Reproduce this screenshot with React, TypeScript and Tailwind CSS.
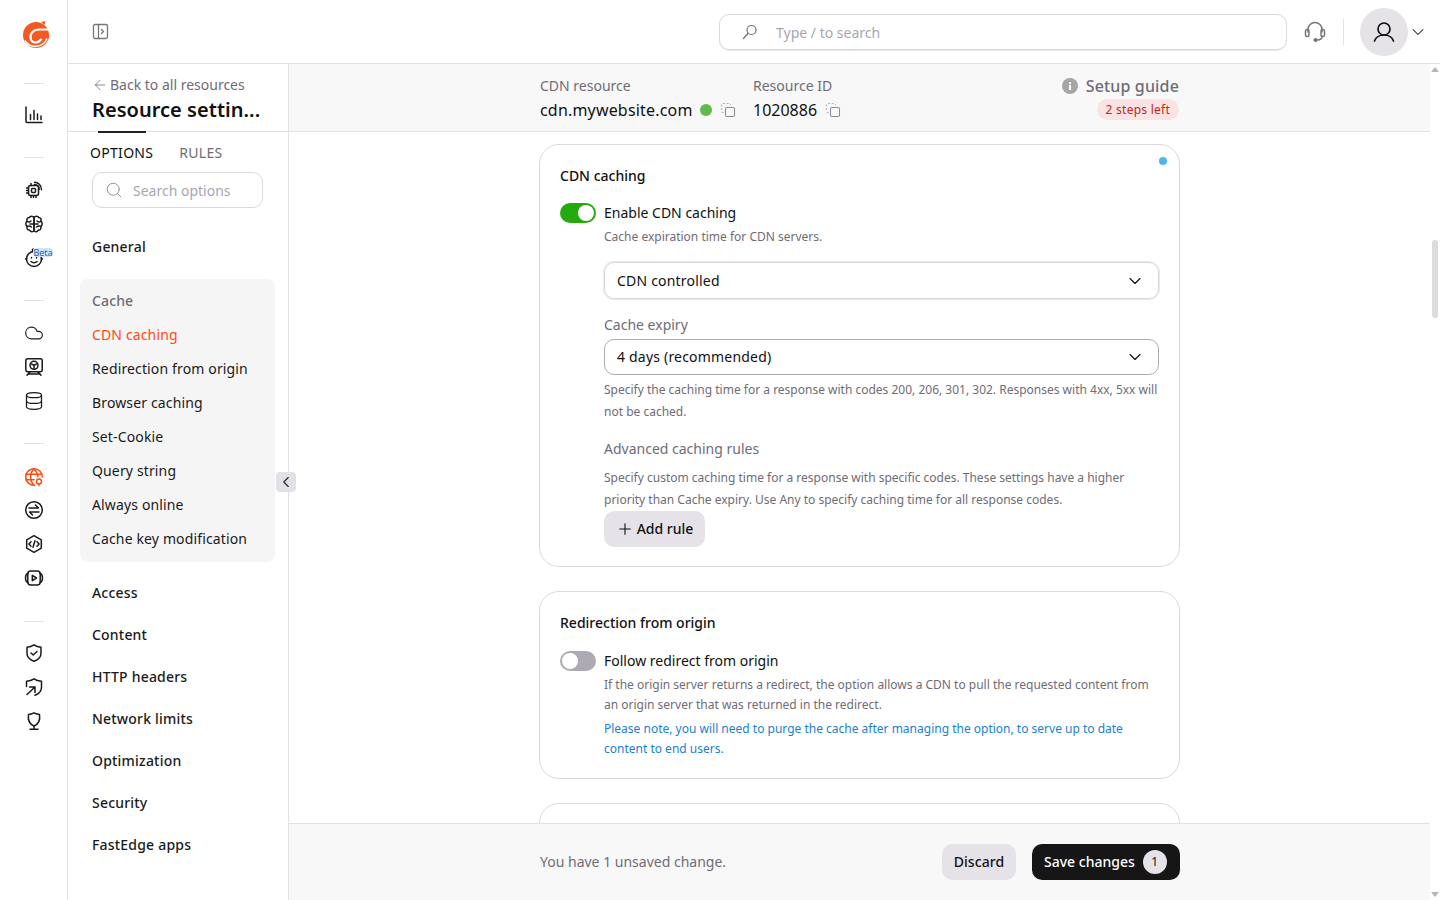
import React from 'react';
import { ArrowLeft, ChevronDown, ChevronLeft, Cloud, Database, Plus, Search } from 'lucide-react';

const Ico = ({ children, color = '#1a1a1a', size = 20 }: { children: React.ReactNode; color?: string; size?: number }) => (
    <svg width={size} height={size} viewBox="0 0 20 20" fill="none" stroke={color} strokeWidth="1.5" strokeLinecap="round" strokeLinejoin="round">
        {children}
    </svg>
);

const Logo = () => (
    <svg width="36" height="38" viewBox="0 0 36 38" fill="none" className="ml-[4px]">
        <circle cx="18" cy="19" r="13" fill="#f15a22" />
        <path d="M23 6l4.500-1-1 4z" fill="#f15a22" />
        <path d="M33 13.500H21.500C15.500 13.500 12 17.500 12.500 22c.4 3.300 3 4.800 6 4.300 2.500-.4 4-1.800 5-3.800" stroke="#fff" strokeWidth="2.200" />
        <path d="M17 20.500H31" stroke="#f15a22" strokeWidth="4" />
        <path d="M7 24.500c3 5 8 6.500 13 5.600 4-.8 7.300-3.600 9-7.600" stroke="#fff" strokeWidth="1.500" />
    </svg>
);

const Divider = ({ className }: { className: string }) => <div className={`w-5 h-px bg-[#e3e1e6] ${className}`} />;

const RailIcon = ({ children, className = '' }: { children: React.ReactNode; className?: string }) => (
    <div className={`h-5 w-5 flex items-center justify-center ${className}`}>{children}</div>
);

function Rail() {
    return (
        <aside className="w-[68px] shrink-0 h-full border-r border-[#e3e1e6] flex flex-col items-center pt-[16px] pl-px">
            <Logo />
            <Divider className="mt-[29px]" />
            <RailIcon className="mt-[21px]">
                <Ico>
                    <path d="M2 2v14.500a1 1 0 0 0 1 1h15" />
                    <path d="M6.500 9.500v5M10 5.500v9M13.500 9v5.500M17 11v3.500" />
                </Ico>
            </RailIcon>
            <Divider className="mt-[32px]" />
            <RailIcon className="mt-[22px]">
                <Ico>
                    <rect x="4.500" y="5.500" width="10" height="10" rx="2" />
                    <rect x="7.500" y="8.500" width="4" height="4" rx="1" />
                    <path d="M2.500 8h2M2.500 10.500h2M2.500 13h2M7 15.500v2M9.500 15.500v2M12 15.500v2M7 3.500v2" />
                    <path d="M10.500 2.200c3.500 0 7 3 7 7.500M10.500 4.500c2.500 0 4.700 2 4.700 4.700" />
                </Ico>
            </RailIcon>
            <RailIcon className="mt-[14px]">
                <Ico>
                    <path d="M10 3.500C9 1.800 6 1.800 5.200 3.600 3.200 3.600 2.200 5.600 3.200 7.200c-1.800 1.100-1.800 4.100 0 5.200-.8 2 .6 4 2.400 3.600.8 2 3.400 2.400 4.400.5z" />
                    <path d="M10 3.500c1-1.700 4-1.700 4.800.1 2 0 3 2 2 3.600 1.800 1.100 1.800 4.100 0 5.200.8 2-.6 4-2.400 3.600-.8 2-3.400 2.400-4.400.5z" />
                    <path d="M3.200 7.200C4.500 8.500 6 8 7 7M3.200 12.400c1.800-.9 2.800-.6 4.300.6M10 10H6M16.800 7.200C15.500 8.500 14 8 13 7M16.800 12.400c-1.800-.9-2.800-.6-4.300.6M10 10h4" />
                </Ico>
            </RailIcon>
            <div className="relative mt-[14px] h-5 w-5 flex items-center justify-center">
                <Ico>
                    <circle cx="10" cy="11" r="7.500" />
                    <path d="M10 3.500c-1.500-.5-2-1.500-1-2.500" />
                    <path d="M7 13.500c1.500 1.500 4.500 1.500 6 0" />
                    <path d="M7.500 9.500v.5M12.500 9.500v.5" />
                    <path d="M2.500 11h-1M18.500 11h-1" />
                </Ico>
                <span className="absolute left-[9px] top-0 h-[9px] w-5 text-center rounded-[4px] bg-[#cfe4fa] text-[9px] leading-[9px] text-[#2a66a8]">Beta</span>
            </div>
            <Divider className="mt-[32px]" />
            <RailIcon className="mt-[22px]"><Cloud size={22} strokeWidth={1.4} color="#1a1a1a" /></RailIcon>
            <RailIcon className="mt-[14px]">
                <Ico>
                    <rect x="1.800" y="1.800" width="16.400" height="13" rx="2" />
                    <circle cx="10" cy="8.300" r="4" />
                    <path d="M7.500 7l2.500 1.300L12.500 7M10 8.300v3" />
                    <path d="M3 18.300l3-3.500M17 18.300l-3-3.500M5 17h10" />
                </Ico>
            </RailIcon>
            <RailIcon className="mt-[14px]"><Database size={20} strokeWidth={1.5} color="#1a1a1a" /></RailIcon>
            <Divider className="mt-[32px]" />
            <RailIcon className="mt-[23px]">
                <Ico color="#ff4b12">
                    <path d="M10.500 18.300a8.300 8.300 0 1 1 7.800-8.300" />
                    <path d="M2 7.300h16M2 12.800h8M10 1.700c-4.500 4.500-4.500 12 0 16.600M10 1.700c2.500 2.500 3.700 5.300 3.800 8" />
                    <circle cx="15" cy="14.500" r="2.500" />
                    <path d="M15 17v1.500" />
                </Ico>
            </RailIcon>
            <RailIcon className="mt-[13px]">
                <Ico>
                    <circle cx="10" cy="10" r="8.300" />
                    <path d="M5 8h9.500l-3-3M15 12H5.500l3 3" />
                </Ico>
            </RailIcon>
            <RailIcon className="mt-[14px]">
                <Ico>
                    <path d="M10 1.700l7.300 4.200v8.200L10 18.300l-7.300-4.200V5.900z" />
                    <path d="M7 7.700L4.900 10 7 12.300M13 7.700l2.100 2.300-2.100 2.300M11 6.800L9 13.200" />
                </Ico>
            </RailIcon>
            <RailIcon className="mt-[14px]">
                <Ico>
                    <rect x="3.800" y="3" width="12.400" height="14" rx="3" />
                    <path d="M3.800 5.500C2 6 1.500 7.500 1.500 10s.5 4 2.300 4.500M16.200 5.500c1.800.5 2.300 2 2.300 4.500s-.5 4-2.300 4.500" />
                    <path d="M8.300 7.300l4.200 2.700-4.200 2.700z" />
                </Ico>
            </RailIcon>
            <Divider className="mt-[33px]" />
            <RailIcon className="mt-[21px]">
                <Ico>
                    <path d="M10 1.800c2 1.500 4.300 2.300 7 2.500v6c0 3.700-2.800 6.500-7 8-4.200-1.500-7-4.300-7-8v-6c2.700-.2 5-1 7-2.500z" />
                    <path d="M7 10l2.200 2 3.800-3.500" />
                </Ico>
            </RailIcon>
            <RailIcon className="mt-[14px]">
                <Ico>
                    <path d="M2.500 9.500V4.300c2.700-.2 5.500-1 7.500-2.500 2 1.500 4.800 2.300 7.500 2.500v6c0 3.500-2.500 6.500-6.500 8" />
                    <path d="M3 17.500L11 10M5.500 10H11v5.500" />
                </Ico>
            </RailIcon>
            <RailIcon className="mt-[14px]">
                <Ico>
                    <path d="M10 1.800c2 1 3.500 1.500 5.500 1.700.8 5 .3 9-5.500 11.500-5.800-2.500-6.300-6.500-5.500-11.500 2-.2 3.500-.7 5.500-1.700z" />
                    <path d="M10 15v3.300M6 18.300h8" />
                </Ico>
            </RailIcon>
        </aside>
    );
}

const cacheItems = ['CDN caching', 'Redirection from origin', 'Browser caching', 'Set-Cookie', 'Query string', 'Always online', 'Cache key modification'];
const navItems = ['Access', 'Content', 'HTTP headers', 'Network limits', 'Optimization', 'Security', 'FastEdge apps'];

function Sidebar() {
    return (
        <div className="w-[221px] shrink-0 h-full border-r border-[#e3e1e6] relative">
            <div className="h-[68px] border-b border-[#e3e1e6] pl-6 pt-[10px] relative">
                <div className="flex items-center gap-[2px] text-sm leading-[22px] text-[#6f6c76]">
                    <ArrowLeft size={16} strokeWidth={1.25} />
                    <span>Back to all resources</span>
                </div>
                <div className="text-[20px] leading-[28px] font-semibold text-[#111] tracking-[0.04px]">Resource settin...</div>
                <div className="absolute left-[30px] bottom-[-2px] w-12 h-[2px] bg-[#222]" />
            </div>
            <div className="flex gap-[26px] pl-[22px] pt-[11px] text-sm leading-5 tracking-[0.3px]">
                <span className="text-[#111]">OPTIONS</span>
                <span className="text-[#6f6c76]">RULES</span>
            </div>
            <div className="ml-6 mt-[9px] w-[171px] h-9 rounded-[10px] border border-[#dad8de] flex items-center pl-3 gap-[10px] text-sm text-[#a9a6b0]">
                <Search size={18} strokeWidth={1.25} color="#8f8c96" />
                <span className="pt-[1px]">Search options</span>
            </div>
            <div className="pl-6 mt-[29px] text-sm leading-5 font-medium tracking-[0.2px] text-[#1a1a1a]">General</div>
            <div className="ml-3 mt-[22px] w-[195px] h-[283px] rounded-lg bg-[#f5f5f5] px-3 pt-[5px] text-sm tracking-[0.14px]">
                <div className="h-[34px] flex items-center text-[#6f6c76] font-medium">Cache</div>
                {cacheItems.map((item, i) => (
                    <div key={item} className={`h-[34px] flex items-center ${i === 0 ? 'text-[#ff4b12]' : 'text-[#1a1a1a]'}`}>{item}</div>
                ))}
            </div>
            <div className="pl-6 pt-[10px] text-sm tracking-[0.2px]">
                {navItems.map((item) => (
                    <div key={item} className="h-[42px] flex items-center font-medium text-[#1a1a1a]">{item}</div>
                ))}
            </div>
            <div className="absolute left-[208px] top-[408px] w-5 h-5 rounded-[4px] bg-[#e3e1e6] flex items-center justify-center">
                <ChevronLeft size={18} strokeWidth={1.5} color="#222" />
            </div>
        </div>
    );
}

const CopyIcon = ({ className = '' }: { className?: string }) => (
    <svg width="16" height="16" viewBox="0 0 16 16" fill="none" className={className}>
        <rect x="5.500" y="5.500" width="9" height="9" rx="1.500" stroke="#8f8c96" strokeWidth="1.100" />
        <path d="M3.500 10.500H3a1.500 1.500 0 0 1-1.500-1.500V3A1.500 1.500 0 0 1 3 1.500h6A1.500 1.500 0 0 1 10.500 3" stroke="#b5b3ba" strokeWidth="1.100" strokeDasharray="2 1.600" />
    </svg>
);

const Toggle = ({ on }: { on: boolean }) => (
    <div className={`w-9 h-5 rounded-full shrink-0 flex items-center px-[2px] ${on ? 'bg-[#25a90e] justify-end' : 'bg-[#aeaab4] justify-start'}`}>
        <div className="w-4 h-4 rounded-full bg-white" />
    </div>
);

function CacheCard() {
    return (
        <section className="relative h-[423px] rounded-[20px] border border-[#dad8de] bg-white pl-5 pr-5 pt-[21px]">
            <div className="absolute right-[12px] top-[12px] w-2 h-2 rounded-full bg-[#4fb4f2]" />
            <h3 className="text-sm leading-5 font-medium text-[#111]">CDN caching</h3>
            <div className="mt-[17px] flex items-center gap-2 text-sm leading-5 text-[#111]">
                <Toggle on />
                <span>Enable CDN caching</span>
            </div>
            <div className="pl-11">
                <p className="mt-[5px] text-xs leading-[18px] text-[#6f6c76]">Cache expiration time for CDN servers.</p>
                <div className="mt-4 h-[37px] rounded-[10px] border border-[#dad8de] shadow-[0_0_0_1px_#eceaef] flex items-center justify-between pl-3 pr-[13px] text-sm tracking-[0.2px] text-[#111]">
                    <span>CDN controlled</span>
                    <ChevronDown size={20} strokeWidth={1.4} />
                </div>
                <div className="mt-4 text-sm leading-5 text-[#6f6c76]">Cache expiry</div>
                <div className="mt-[4px] h-[36px] rounded-[10px] border border-[#aeaab4] flex items-center justify-between pl-3 pr-[13px] text-sm tracking-[0.2px] text-[#111]">
                    <span>4 days (recommended)</span>
                    <ChevronDown size={20} strokeWidth={1.4} />
                </div>
                <p className="mt-[4px] text-xs leading-[22px] text-[#6f6c76]">Specify the caching time for a response with codes 200, 206, 301, 302. Responses with 4xx, 5xx will not be cached.</p>
                <div className="mt-[16px] text-sm leading-5 text-[#6f6c76]">Advanced caching rules</div>
                <p className="mt-[8px] text-xs leading-[22px] text-[#6f6c76]">Specify custom caching time for a response with specific codes. These settings have a higher priority than Cache expiry. Use Any to specify caching time for all response codes.</p>
                <button className="h-9 w-[101px] rounded-[10px] bg-[#e5e3e8] flex items-center justify-center gap-[3px] text-sm font-medium text-[#111]">
                    <Plus size={18} strokeWidth={1.5} />
                    Add rule
                </button>
            </div>
        </section>
    );
}

function RedirectCard() {
    return (
        <section className="mt-6 h-[188px] rounded-[20px] border border-[#dad8de] bg-white pl-5 pr-5 pt-[21px]">
            <h3 className="text-sm leading-5 font-medium text-[#111]">Redirection from origin</h3>
            <div className="mt-[18px] flex items-center gap-2 text-sm leading-5 text-[#111]">
                <Toggle on={false} />
                <span>Follow redirect from origin</span>
            </div>
            <div className="pl-11 text-xs leading-5">
                <p className="mt-[4px] text-[#6f6c76]">If the origin server returns a redirect, the option allows a CDN to pull the requested content from an origin server that was returned in the redirect.</p>
                <p className="mt-1 text-[#1a7fd0]">Please note, you will need to purge the cache after managing the option, to serve up to date content to end users.</p>
            </div>
        </section>
    );
}

function Scrollbar() {
    return (
        <div className="w-[10px] shrink-0 h-full bg-white flex flex-col items-center">
            <div className="mt-[3px] w-0 h-0 border-x-[4px] border-x-transparent border-b-[5px] border-b-[#b5b5b5]" />
            <div className="mt-[168px] w-[6px] h-[78px] rounded-full bg-[#dcdcdc]" />
            <div className="mt-auto mb-[3px] w-0 h-0 border-x-[4px] border-x-transparent border-t-[5px] border-t-[#b5b5b5]" />
        </div>
    );
}

export default function App() {
    return (
        <div className="w-[1440px] h-[900px] flex overflow-hidden bg-white font-['Noto_Sans',sans-serif]">
            <Rail />
            <div className="flex-1 min-w-0 flex flex-col">
                <header className="h-16 shrink-0 border-b border-[#e3e1e6] flex items-center">
                    <div className="ml-6">
                        <svg width="17" height="17" viewBox="0 0 17 17" fill="none" stroke="#77747e" strokeWidth="1.300" strokeLinejoin="round" strokeLinecap="round">
                            <rect x="1.500" y="1.500" width="14" height="14" rx="1.500" />
                            <path d="M6.500 1.500v14M9.500 6.500l2 2-2 2" />
                        </svg>
                    </div>
                    <div className="ml-[610px] mt-[1px] w-[568px] h-9 rounded-[10px] border border-[#dad8de] shadow-[0_1px_0_#eceaef] flex items-center pl-[21px] gap-[17px] text-sm text-[#a9a6b0]">
                        <svg width="18" height="18" viewBox="0 0 18 18" fill="none" stroke="#6f6c76" strokeWidth="1.200" strokeLinecap="round">
                            <circle cx="10.500" cy="7" r="4.500" />
                            <path d="M7 10.500L2.500 15.500" />
                        </svg>
                        <span className="pt-[2px]">Type / to search</span>
                    </div>
                    <div className="ml-[16px]">
                        <svg width="24" height="24" viewBox="0 0 24 24" fill="none" stroke="#77747e" strokeWidth="1.500" strokeLinecap="round" strokeLinejoin="round">
                            <path d="M5 12V9.500a7 7 0 0 1 14 0V12" />
                            <rect x="2.500" y="9.500" width="3.500" height="7" rx="1.500" />
                            <rect x="18" y="9.500" width="3.500" height="7" rx="1.500" />
                            <path d="M19 16.500c0 2-1.500 3.500-5 3.500" />
                            <circle cx="12.500" cy="20" r="1.300" fill="#77747e" />
                        </svg>
                    </div>
                    <div className="ml-[16px] w-px h-[26px] bg-[#e3e1e6]" />
                    <div className="ml-4 w-12 h-12 rounded-full bg-[#e5e3e8] flex items-center justify-center">
                        <svg width="24" height="24" viewBox="0 0 24 24" fill="none" stroke="#111" strokeWidth="1.700" strokeLinecap="round">
                            <circle cx="12" cy="9" r="6" />
                            <path d="M2.500 21c1.500-4 5-6 9.500-6s8 2 9.500 6" />
                        </svg>
                    </div>
                    <ChevronDown size={20} strokeWidth={1.25} color="#222" />
                </header>
                <div className="flex-1 min-h-0 flex">
                    <Sidebar />
                    <div className="flex-1 min-w-0 flex flex-col">
                        <div className="h-[68px] shrink-0 bg-[#f8f8f8] border-b border-[#e3e1e6]">
                            <div className="w-[641px] ml-[250px] flex">
                                <div className="w-[214px] pt-[11px]">
                                    <div className="text-sm leading-[22px] text-[#6f6c76] pl-px">CDN resource</div>
                                    <div className="flex items-center text-base leading-[26px] text-[#111] pl-px">
                                        <span className="tracking-[0.18px]">cdn.mywebsite.com</span>
                                        <span className="ml-[7px] w-3 h-3 rounded-full bg-[#5fbc4c]" />
                                        <CopyIcon className="ml-[8px]" />
                                    </div>
                                </div>
                                <div className="pt-[11px] flex-1">
                                    <div className="text-sm leading-[22px] text-[#6f6c76]">Resource ID</div>
                                    <div className="flex items-center gap-2 text-base leading-[26px] text-[#111]">
                                        1020886
                                        <CopyIcon />
                                    </div>
                                </div>
                                <div className="pt-[10px] pr-px flex flex-col items-end">
                                    <div className="flex items-center gap-2 text-base leading-[24px] font-medium tracking-[0.15px] text-[#6f6c76]">
                                        <svg width="16" height="16" viewBox="0 0 16 16">
                                            <circle cx="8" cy="8" r="8" fill="#a6a6a6" />
                                            <rect x="7" y="7" width="2" height="5" fill="#fff" />
                                            <rect x="7" y="4" width="2" height="2" fill="#fff" />
                                        </svg>
                                        Setup guide
                                    </div>
                                    <span className="mt-[1px] h-[21px] px-[9px] rounded-full bg-[#fbe3e3] text-xs leading-[21px] tracking-[0.25px] text-[#c02626]">2 steps left</span>
                                </div>
                            </div>
                        </div>
                        <div className="flex-1 min-h-0 overflow-hidden">
                            <div className="w-[641px] ml-[250px] pt-3">
                                <CacheCard />
                                <RedirectCard />
                                <section className="mt-6 h-[120px] rounded-[20px] border border-[#dad8de] bg-white" />
                            </div>
                        </div>
                        <footer className="h-[77px] shrink-0 bg-[#f8f8f8] border-t border-[#e3e1e6]">
                            <div className="w-[641px] ml-[250px] h-full flex items-center">
                                <span className="text-sm text-[#6f6c76] pl-px">You have 1 unsaved change.</span>
                                <button className="ml-auto h-9 w-[74px] rounded-[10px] bg-[#e5e3e8] text-sm font-medium tracking-[0.1px] text-[#111]">Discard</button>
                                <button className="ml-4 h-9 w-[148px] rounded-[10px] bg-[#161616] flex items-center pl-3 text-sm font-medium text-white">
                                    Save changes
                                    <span className="ml-2 w-6 h-6 rounded-full bg-[#e5e3e8] text-xs leading-6 text-[#111] font-normal">1</span>
                                </button>
                            </div>
                        </footer>
                    </div>
                    <Scrollbar />
                </div>
            </div>
        </div>
    );
}
